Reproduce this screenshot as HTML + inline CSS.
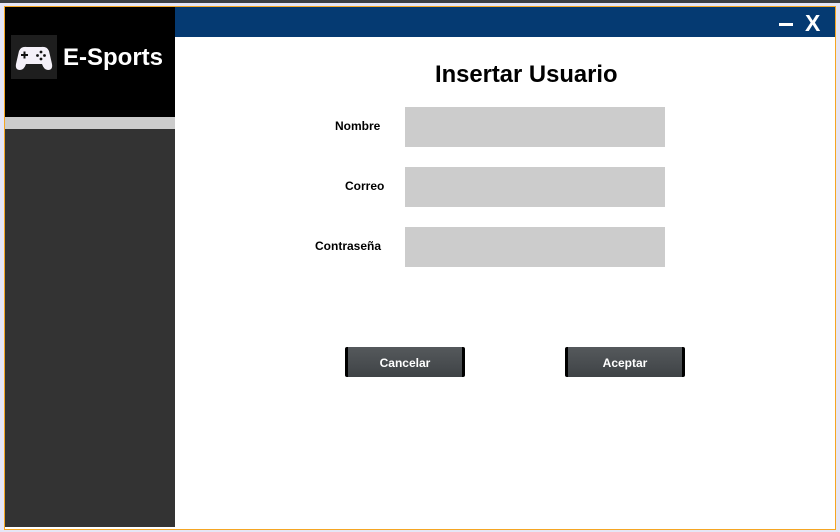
<!DOCTYPE html>
<html><head><meta charset="utf-8"><style>
*{margin:0;padding:0;box-sizing:border-box}
body{width:840px;height:532px;background:#e6e6f6;position:relative;overflow:hidden;font-family:"Liberation Sans",Arial,sans-serif}
.top{position:absolute;left:0;top:0;width:840px;height:3px;background:#3c3f44}
.frame{position:absolute;left:4px;top:6px;width:832px;height:524px;border:1px solid #f5a623;background:#fff}
.side{position:absolute;left:5px;top:7px;width:170px;height:520px;background:#333}
.sidetop{position:absolute;left:0;top:0;width:170px;height:110px;background:#000}
.band{position:absolute;left:0;top:110px;width:170px;height:12px;background:#cccccc}
.icon{position:absolute;left:6px;top:28px;width:46px;height:44px;background:#1e1e1e}
.brand{position:absolute;left:58px;top:37px;color:#fff;font-weight:bold;font-size:24px}
.head{position:absolute;left:175px;top:7px;width:660px;height:30px;background:#053a72}
.min{position:absolute;left:779px;top:23px;width:14px;height:3px;background:#fff}
.x{position:absolute;left:805px;top:10px;color:#fff;font-weight:bold;font-size:23px;line-height:26px}
h1{position:absolute;left:435px;top:61px;font-size:23.8px;font-weight:bold;color:#000}
.lbl{position:absolute;font-size:12px;font-weight:bold;color:#000}
.in{position:absolute;left:405px;width:260px;height:40px;background:#cccccc}
.btn{position:absolute;top:347px;width:120px;height:30px;background:linear-gradient(#55595c,#3f4346);border-left:3px solid #000;border-right:3px solid #000;color:#fff;font-size:12px;font-weight:bold;text-align:center;line-height:32px;border-radius:2px}
</style></head><body>
<div class="top"></div>
<div class="frame"></div>
<div class="side"><div class="sidetop"></div><div class="band"></div>
<div class="icon"><svg width="46" height="44" viewBox="0 0 46 44"><path d="M8 16 Q10 11 16 12 L30 12 Q36 11 38 16 L41 29 Q42 35 37 35 Q33 35 31 29 L15 29 Q13 35 9 35 Q4 35 5 29 Z" fill="#f4f0f8"/><path d="M10 20h7M13.5 16.5v7" stroke="#111" stroke-width="2"/><circle cx="30" cy="17" r="1.4" fill="#111"/><circle cx="33.5" cy="20.5" r="1.4" fill="#111"/><circle cx="30" cy="24" r="1.4" fill="#111"/><circle cx="26.5" cy="20.5" r="1.4" fill="#111"/></svg></div>
<div class="brand">E-Sports</div></div>
<div class="head"></div>
<div class="min"></div><div class="x">X</div>
<h1>Insertar Usuario</h1>
<div class="lbl" style="left:335px;top:119px">Nombre</div>
<div class="lbl" style="left:345px;top:179px">Correo</div>
<div class="lbl" style="left:315px;top:239px">Contraseña</div>
<div class="in" style="top:107px"></div>
<div class="in" style="top:167px"></div>
<div class="in" style="top:227px"></div>
<div class="btn" style="left:345px">Cancelar</div>
<div class="btn" style="left:565px">Aceptar</div>
</body></html>
